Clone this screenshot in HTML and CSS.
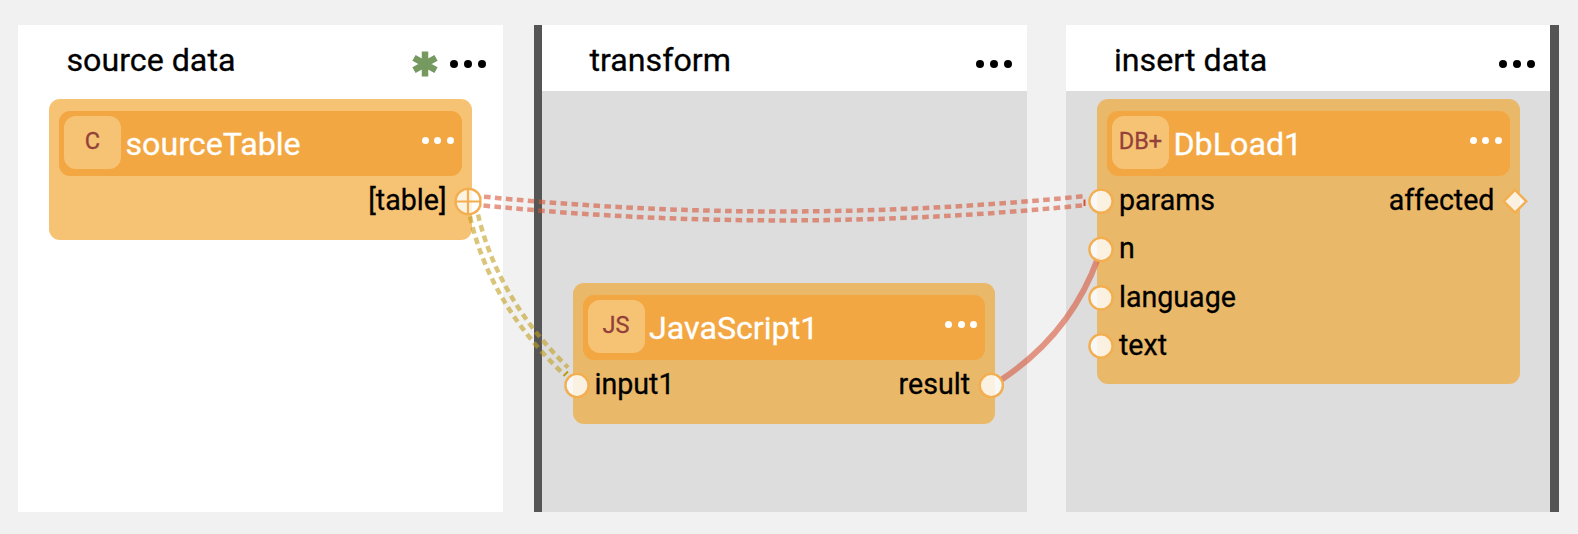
FILE: index.html
```html
<!DOCTYPE html>
<html lang="en">
<head>
<meta charset="utf-8">
<title>Pipeline</title>
<link rel="stylesheet" href="styles.css">
</head>
<body>
<main class="board">
  <section class="step step-source">
    <header class="step-head">
      <h2 class="step-title">source data</h2>
      <svg class="star" viewBox="0 0 26 26"><path d="M13 .5V25.500M2 6.800 24 19.200M24 6.800 2 19.200"/></svg>
      <span class="dots"><i></i><i></i><i></i></span>
    </header>
    <div class="step-body">
      <article class="node">
        <div class="node-head"><span class="badge">C</span><span class="name">sourceTable</span><span class="dots small"><i></i><i></i><i></i></span></div>
        <div class="row"><span></span><span>[table]</span></div>
      </article>
    </div>
  </section>
  <section class="step step-transform">
    <header class="step-head">
      <h2 class="step-title">transform</h2>
      <span class="dots"><i></i><i></i><i></i></span>
    </header>
    <div class="step-body">
      <article class="node node-js">
        <div class="node-head"><span class="badge">JS</span><span class="name">JavaScript1</span><span class="dots small"><i></i><i></i><i></i></span></div>
        <div class="row"><span>input1</span><span>result</span></div>
      </article>
    </div>
  </section>
  <section class="step step-insert">
    <header class="step-head">
      <h2 class="step-title">insert data</h2>
      <span class="dots"><i></i><i></i><i></i></span>
    </header>
    <div class="step-body">
      <article class="node node-db">
        <div class="node-head"><span class="badge">DB+</span><span class="name">DbLoad1</span><span class="dots small"><i></i><i></i><i></i></span></div>
        <div class="row"><span>params</span><span>affected</span></div>
        <div class="row"><span>n</span></div>
        <div class="row"><span>language</span></div>
        <div class="row"><span>text</span></div>
      </article>
    </div>
  </section>
  <svg class="wires" viewBox="0 0 1578 534">
    <g class="wire red dashed">
      <path d="M484 196.700Q784 226.500 1083.500 196.200"/>
      <path d="M483.500 205.500Q784 235.500 1084.500 205.200"/>
    </g>
    <path class="tip tip-red" d="M1084.500 199.500V206"/>
    <g class="wire gold dashed">
      <path d="M470 216.500Q489.700 303.500 562.500 373"/>
      <path d="M478 214.500Q498 299 568 367.500"/>
    </g>
    <path class="tip tip-gold" d="M563.500 376 568 371.500"/>
    <path class="wire red solid" d="M1001 380Q1070.500 334 1098 258"/>
    <g class="ports">
      <path d="M480.300 197.500A12.700 12.700 0 1 0 480.300 205.500Z"/>
      <path class="cross" d="M455.500 201.500H480M468 189V214"/>
      <circle cx="577" cy="385.500" r="11.600"/>
      <circle cx="991.300" cy="385.500" r="11.600"/>
      <circle cx="1101" cy="201.200" r="11.600"/>
      <circle cx="1101" cy="249.500" r="11.600"/>
      <circle cx="1101" cy="297.800" r="11.600"/>
      <circle cx="1101" cy="346" r="11.600"/>
      <path d="M1515 190 1526.300 201.300 1515 212.600 1503.700 201.300Z"/>
    </g>
  </svg>
</main>
</body>
</html>
```

FILE: styles.css
```css
* { box-sizing: border-box; }
body { margin: 0; background: #f1f1f1; font-family: Roboto, sans-serif; color: #000; -webkit-text-stroke: .3px; }
.board { position: relative; display: flex; width: 1578px; height: 534px; padding: 25px 0 22px 18px; }
.step { display: flex; flex-direction: column; flex: none; background: #fff; }
.step-source { width: 484.500px; }
.step-transform { width: 493px; margin-left: 31px; border-left: 8.500px solid #555; }
.step-insert { width: 493px; margin-left: 39.500px; border-right: 9px solid #555; }
.step-head { display: flex; align-items: center; height: 66px; padding: 0 15px 0 48px; }
.step-source .step-head { padding: 0 17px 0 48.500px; }
.step-title { margin: 3px 0 0; flex: 1; font-size: 32.200px; font-weight: 400; line-height: 72px; }
.star { width: 26px; height: 26px; margin: 12px 12px 0 0; fill: none; stroke: #75995f; stroke-width: 6.500; }
.dots { display: flex; gap: 5.900px; margin-top: 12px; }
.dots i { width: 8px; height: 8px; border-radius: 50%; background: #000; }
.dots.small { gap: 5.300px; margin: -6px 8px 0 auto; }
.dots.small i { width: 7px; height: 7px; background: #fff; }
.step-body { flex: 1; padding: 8px 31px 0; }
.step-transform .step-body, .step-insert .step-body { background: #ddd; }
.node { width: 422.500px; height: 140.500px; padding: 12px 10px 0; border-radius: 11px; background: #f6c374; }
.node-js { margin-top: 184.300px; background: #eab869; }
.node-db { height: 285px; background: #eab869; }
.node-head { display: flex; align-items: center; height: 65px; padding-left: 5px; border-radius: 11px; background: #f3a742; }
.badge { width: 57px; height: 53px; margin-top: -2px; border-radius: 12px; background: #f6c374; color: #93403a; font-size: 23.500px; line-height: 50px; text-align: center; }
.name { margin: 2px 0 0 4.500px; color: #fff; font-size: 32.200px; line-height: 65px; }
.row { display: flex; justify-content: space-between; height: 48.300px; padding: 0 15px 0 12px; font-size: 28.600px; line-height: 48.300px; }
.wires { position: absolute; left: 0; top: 0; width: 1578px; height: 534px; fill: none; }
.wire { stroke-width: 4.500; opacity: .6; }
.red { stroke: #d9573a; }
.gold { stroke: #c2a024; }
.solid { stroke-width: 6; }
.dashed path { stroke-dasharray: 6.600 4.380; }
.tip { stroke-width: 2; }
.tip-red { stroke: #dc4a2c; }
.tip-gold { stroke: #bd9b10; }
.ports { fill: rgba(255, 255, 255, .8); stroke: #f3ae4f; stroke-width: 2.400; }
.cross { stroke-width: 2.200; }
```
